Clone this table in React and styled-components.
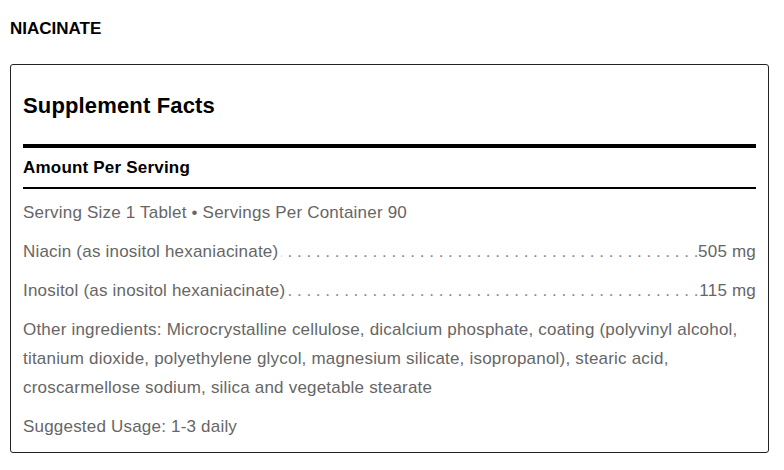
import styled, { createGlobalStyle } from "styled-components";

const GlobalStyle = createGlobalStyle`
  body {
    margin: 0;
    background: #fff;
    font-family: "Liberation Sans", Arial, Helvetica, sans-serif;
  }
`;

const Page = styled.div`
  padding: 19px 15px 16px 10px;
`;

const ProductName = styled.h1`
  margin: 0 0 25px;
  font-size: 17px;
  line-height: 20px;
  font-weight: 700;
  color: #000;
`;

const FactsBox = styled.section`
  border: 1px solid #222;
  border-radius: 3px;
  padding: 28px 12px 11px;
`;

const FactsTitle = styled.h2`
  margin: 0;
  font-size: 22px;
  line-height: 26px;
  font-weight: 700;
  letter-spacing: 0.15px;
  color: #000;
  padding-bottom: 25px;
  border-bottom: 4px solid #000;
`;

const AmountHeader = styled.h3`
  margin: 0;
  padding: 10px 0 9px;
  font-size: 17px;
  line-height: 20px;
  font-weight: 700;
  letter-spacing: 0.2px;
  color: #000;
  border-bottom: 2px solid #000;
`;

const Body = styled.div`
  padding-top: 9px;
`;

const Line = styled.p`
  margin: 0 0 10px;
  font-size: 17px;
  line-height: 29px;
  letter-spacing: 0.2px;
  color: #666;

  &:last-child {
    margin-bottom: 0;
  }
`;

const LeaderRow = styled(Line)`
  overflow: hidden;
  white-space: nowrap;

  &::before {
    float: left;
    width: 0;
    white-space: nowrap;
    content: "${". ".repeat(120)}";
    letter-spacing: 0;
    color: #888;
  }
`;

const Name = styled.span`
  background: #fff;
  padding-right: 3px;
`;

const Amount = styled.span`
  float: right;
  background: #fff;
  padding-left: 1px;
`;

const ingredients = [
  { name: "Niacin (as inositol hexaniacinate)", amount: "505 mg" },
  { name: "Inositol (as inositol hexaniacinate)", amount: "115 mg" },
];

function App() {
  return (
    <>
      <GlobalStyle />
      <Page>
        <ProductName>NIACINATE</ProductName>
        <FactsBox>
          <FactsTitle>Supplement Facts</FactsTitle>
          <AmountHeader>Amount Per Serving</AmountHeader>
          <Body>
            <Line>Serving Size 1 Tablet • Servings Per Container 90</Line>
            {ingredients.map((item) => (
              <LeaderRow key={item.name}>
                <Name>{item.name}</Name>
                <Amount>{item.amount}</Amount>
              </LeaderRow>
            ))}
            <Line>
              Other ingredients: Microcrystalline cellulose, dicalcium phosphate,
              coating (polyvinyl alcohol, titanium dioxide, polyethylene glycol,
              magnesium silicate, isopropanol), stearic acid, croscarmellose
              sodium, silica and vegetable stearate
            </Line>
            <Line>Suggested Usage: 1-3 daily</Line>
          </Body>
        </FactsBox>
      </Page>
    </>
  );
}

export default App;
